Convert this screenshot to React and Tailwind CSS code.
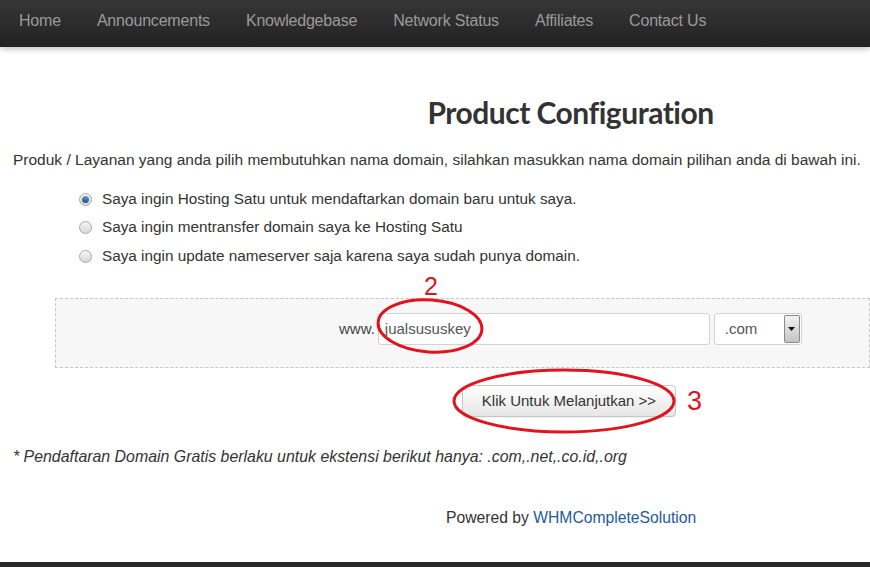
import React from "react";

const navItems = [
  "Home",
  "Announcements",
  "Knowledgebase",
  "Network Status",
  "Affiliates",
  "Contact Us",
];

const options = [
  { label: "Saya ingin Hosting Satu untuk mendaftarkan domain baru untuk saya.", checked: true },
  { label: "Saya ingin mentransfer domain saya ke Hosting Satu", checked: false },
  { label: "Saya ingin update nameserver saja karena saya sudah punya domain.", checked: false },
];

const Radio = ({ checked }) => (
  <span className="flex h-[13px] w-[13px] items-center justify-center rounded-full border border-[#a8a8a8] bg-gradient-to-b from-[#f4f4f4] to-[#d8d8d8]">
    {checked && (
      <span className="h-[7px] w-[7px] rounded-full bg-gradient-to-b from-[#6a9fd0] to-[#1d4f86]" />
    )}
  </span>
);

export default function App() {
  return (
    <div className="relative h-[567px] w-[870px] overflow-hidden bg-white font-['Liberation_Sans',Arial,sans-serif] text-[#333]">
      <nav className="flex h-[47px] items-center bg-gradient-to-b from-[#363636] to-[#222] pb-[5px] pl-[19px] shadow-[0_2px_6px_rgba(0,0,0,0.25)]">
        <ul className="flex gap-[36px] text-[16px] tracking-[-0.2px] text-[#9a9a9a]">
          {navItems.map((n) => (
            <li key={n}>{n}</li>
          ))}
        </ul>
      </nav>

      <h1 className="mt-[47px] pl-[271px] text-center font-['Lato',sans-serif] text-[30px] font-bold leading-[36px] tracking-[-0.5px] text-[#333]">
        Product Configuration
      </h1>

      <p className="mt-[20px] whitespace-nowrap pl-[13px] text-[15.5px] leading-[20px]">
        Produk / Layanan yang anda pilih membutuhkan nama domain, silahkan masukkan nama domain pilihan anda di bawah ini.
      </p>

      <div className="mt-[19px] flex flex-col gap-[8.5px] pl-[79px]">
        {options.map((o) => (
          <label key={o.label} className="flex h-[20px] items-center gap-[10px] text-[15.3px]">
            <Radio checked={o.checked} />
            <span>{o.label}</span>
          </label>
        ))}
      </div>

      <div className="relative ml-[55px] mt-[32px] flex h-[70px] items-center border border-dashed border-[#c8c8c8] bg-[#f7f7f7] pb-[8px] pl-[283px]">
        <span className="mr-[3px] text-[15px] text-[#444]">www.</span>
        <div className="flex h-[32px] w-[332px] items-center rounded-[3px] border border-[#d2d2d2] bg-white px-[6px] text-[15px] text-[#555]">
          jualsususkey
        </div>
        <div className="ml-[4px] flex h-[32px] w-[88px] items-center justify-between rounded-[3px] border border-[#d2d2d2] bg-white pl-[10px] pr-[1px] text-[15px] text-[#555]">
          <span>.com</span>
          <span className="flex h-[28px] w-[16px] items-center justify-center rounded-[2px] border border-[#8a8a8a] bg-gradient-to-b from-[#f2f2f2] to-[#c4c4c4]">
            <svg width="7" height="4" viewBox="0 0 7 4">
              <path d="M0 0h7L3.5 4z" fill="#111" />
            </svg>
          </span>
        </div>
        {/* annotation 2 */}
        <span className="absolute left-[368px] top-[-25px] text-[25px] leading-[24px] text-[#e0141e]">
          2
        </span>
        <svg className="absolute left-[318px] top-[-2px]" width="112" height="58" viewBox="0 0 112 58">
          <ellipse cx="56" cy="29" rx="52" ry="26" fill="none" stroke="#e0141e" strokeWidth="3" transform="rotate(4 56 29)" />
        </svg>
      </div>

      <div className="relative mt-[17px] flex h-[32px] pl-[462px]">
        <button className="h-[32px] w-[214px] rounded-[4px] border border-[#c6c6c6] bg-gradient-to-b from-white to-[#e6e6e6] text-[15px] text-[#333] shadow-[0_1px_1px_rgba(0,0,0,0.05)]">
          Klik Untuk Melanjutkan &gt;&gt;
        </button>
        <svg className="absolute left-[451px] top-[-18px]" width="228" height="68" viewBox="0 0 228 68">
          <ellipse cx="113" cy="34" rx="110" ry="31" fill="none" stroke="#e0141e" strokeWidth="3" />
        </svg>
        <span className="ml-[11px] text-[27px] leading-[32px] text-[#e0141e]">3</span>
      </div>

      <p className="mt-[30px] whitespace-nowrap pl-[13px] text-[15.9px] italic leading-[20px]">
        * Pendaftaran Domain Gratis berlaku untuk ekstensi berikut hanya: .com,.net,.co.id,.org
      </p>

      <p className="mt-[41px] pl-[446px] text-[15.7px] leading-[20px]">
        Powered by <span className="text-[#1e5a9c]">WHMCompleteSolution</span>
      </p>

      <div className="absolute bottom-0 left-0 h-[5px] w-full bg-[#2a2a2a]" />
    </div>
  );
}
